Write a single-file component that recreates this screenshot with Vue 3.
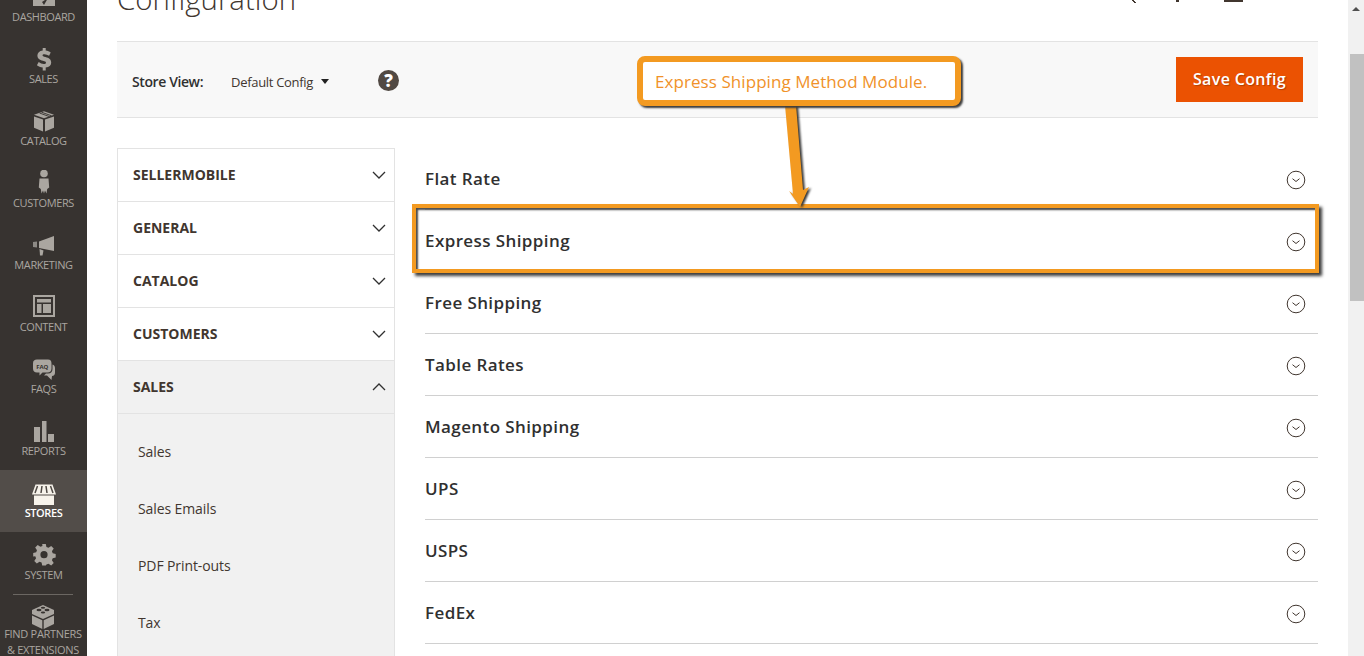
<script setup>
const navItems = [
  { label: 'Dashboard', icon: 'dash' },
  { label: 'Sales', icon: 'sales' },
  { label: 'Catalog', icon: 'catalog' },
  { label: 'Customers', icon: 'customers' },
  { label: 'Marketing', icon: 'marketing' },
  { label: 'Content', icon: 'content' },
  { label: 'FAQs', icon: 'faqs' },
  { label: 'Reports', icon: 'reports' },
  { label: 'Stores', icon: 'stores', active: true },
  { label: 'System', icon: 'system' }
]
const groups = [
  { label: 'SELLERMOBILE' },
  { label: 'GENERAL' },
  { label: 'CATALOG' },
  { label: 'CUSTOMERS' },
  { label: 'SALES', open: true }
]
const subItems = ['Sales', 'Sales Emails', 'PDF Print-outs', 'Tax']
const methods = ['Flat Rate', 'Express Shipping', 'Free Shipping', 'Table Rates', 'Magento Shipping', 'UPS', 'USPS', 'FedEx']
</script>

<template>
  <div class="shell">
    <aside class="sidebar">
      <div v-for="item in navItems" :key="item.label" class="nav-item" :class="{ active: item.active }">
        <svg class="nav-icon" viewBox="0 0 26 26" width="26" height="26" aria-hidden="true">
          <g v-if="item.icon === 'dash'"><path d="M2 0h22v22H2z" /><path d="M13 21l4-7-6 4z" fill="#373330" /></g>
          <path v-else-if="item.icon === 'sales'" d="M11.7 2h3v2.6c2 .2 3.700 .9 5 1.800l-1.600 3.300c-1.500-1-3.100-1.500-4.600-1.500-1.300 0-2 .4-2 1.100 0 .8.900 1.200 3 1.800 3.400 1 5.700 2.300 5.700 5.500 0 2.800-2 4.600-5.500 5v2.900h-3v-2.900c-2.300-.3-4.300-1.100-5.800-2.300l1.800-3.300c1.600 1.200 3.400 2 5 2 1.500 0 2.300-.5 2.300-1.300 0-.9-1-1.300-3.100-1.900-3.300-1-5.500-2.200-5.500-5.300 0-2.700 1.900-4.500 5.300-5z" />
          <g v-else-if="item.icon === 'catalog'" transform="translate(0 2.500) scale(1 .84)"><path d="M13 1l10 4-10 4.200L3 5z" /><path d="M3 7l9 3.800V25L3 20.500z" /><path d="M14 10.800L23 7v13.500L14 25z" /><path d="M8.500 3l10 4.300M10.500 2l10 4.300" stroke="#373330" stroke-width="1" fill="none" /></g>
          <g v-else-if="item.icon === 'customers'" transform="translate(0 -1.500)"><circle cx="13" cy="5" r="3.800" /><path d="M8.500 10h9l.7 9-2 1.500-.7 4.500-1.500-3-1 3-1-3-1.500 3-.7-4.500-2-1.500z" /></g>
          <g v-else-if="item.icon === 'marketing'"><path d="M8 9.500L23 4v15L8 16z" /><path d="M2 10l4-.5v6L2 15z" fill="#8d8a85" /><path d="M8.500 17l4 1.500-1 5h-2.500z" /></g>
          <g v-else-if="item.icon === 'content'" transform="translate(0 -1)"><path d="M2 2h22v22H2zM4 4v18h18V4z" fill-rule="evenodd" /><path d="M6 6h14v3.500H6zM6 11h4.500v9H6zM12 11h8v9h-8z" /></g>
          <g v-else-if="item.icon === 'faqs'" transform="translate(0 1.500)"><path d="M2 6c0-3 1.500-4 4-4h11c2.500 0 3.500 1.500 3.500 4v5c0 2.500-1.500 4-4 4h-5l-3 3v-3H6c-2.500 0-4-1.500-4-4z" /><path d="M21.500 7c1.500.5 2.500 1.500 2.500 3.500V15c0 2-1 3.500-3 3.500l-.5 4-4.500-4.500h-3l2-2h2c3 0 4.500-2 4.500-4.500z" /><text x="11.300" y="11" text-anchor="middle" class="faq-text">FAQ</text></g>
          <path v-else-if="item.icon === 'reports'" d="M3 9h6v15H3zM11 3h4.500v21H11zM17 16h6v8h-6z" />
          <g v-else-if="item.icon === 'stores'" transform="translate(0 2.500)"><path d="M4.500 2h17l3.500 10H1z" /><path d="M6.500 3.500L4 10.500M11 3.500L10 10.500M15 3.500L16 10.500M19.500 3.500L22 10.500" stroke="#4f4a45" stroke-width="1.500" fill="none" /><path d="M3 13h20v9.500H3z" /></g>
          <path v-else-if="item.icon === 'system'" transform="translate(1.300 1) scale(.9)" d="M11 1h4l.7 3.500 2.300.9 3-2 2.800 2.800-2 3 .9 2.300 3.300.7v4l-3.300.7-.9 2.300 2 3-2.800 2.800-3-2-2.300.9L15 25h-4l-.7-3.300-2.300-.9-3 2-2.800-2.800 2-3-.9-2.300L1 15v-4l3.300-.7.900-2.300-2-3L6 2.200l3 2 2.300-.9zM13 9a4 4 0 1 0 0 8 4 4 0 0 0 0-8z" fill-rule="evenodd" />
        </svg>
        <span class="nav-label">{{ item.label }}</span>
      </div>
      <div class="nav-extra">
        <svg class="nav-icon" viewBox="0 0 26 26" width="26" height="26" aria-hidden="true">
          <path d="M13 1l11 5v4l-11 5L2 10V6z" />
          <path d="M2 11.500l10.300 4.700V25L2 20zM24 11.500l-10.300 4.700V25L24 20z" />
          <ellipse cx="9" cy="6" rx="2.500" ry="1.200" fill="#373330" /><ellipse cx="17" cy="6" rx="2.500" ry="1.200" fill="#373330" /><ellipse cx="13" cy="3.800" rx="2.200" ry="1" fill="#373330" /><ellipse cx="13" cy="8.500" rx="2.200" ry="1" fill="#373330" />
        </svg>
        <span class="nav-label">Find Partners<br />&amp; Extensions</span>
      </div>
    </aside>

    <main class="main">
      <header class="page-head">
        <h1 class="title">Configuration</h1>
        <div class="head-tools">
          <span class="tool-search"></span>
          <span class="tool-bell"></span>
          <span class="tool-user"></span>
        </div>
      </header>

      <div class="actions">
        <div class="scope">
          <span class="scope-label">Store View:</span>
          <span class="scope-value">Default Config</span>
          <span class="caret"></span>
          <span class="help">?</span>
        </div>
        <button class="save" type="button">Save Config</button>
      </div>

      <div class="columns">
        <nav class="tabs">
          <div v-for="g in groups" :key="g.label" class="tab" :class="{ open: g.open }">
            <span>{{ g.label }}</span>
            <svg width="14" height="8" viewBox="0 0 14 8" aria-hidden="true">
              <path :d="g.open ? 'M1 7l6-6 6 6' : 'M1 1l6 6 6-6'" fill="none" stroke="#303030" stroke-width="1.300" />
            </svg>
          </div>
          <div class="subs">
            <div v-for="s in subItems" :key="s" class="sub">{{ s }}</div>
          </div>
        </nav>

        <section class="methods">
          <div v-for="m in methods" :key="m" class="method">
            <span>{{ m }}</span>
            <svg width="20" height="20" viewBox="0 0 20 20" aria-hidden="true">
              <circle cx="10" cy="10" r="8.800" fill="none" stroke="#41362f" stroke-width="1" />
              <path d="M6.500 8.700l3.500 2.800 3.500-2.800" fill="none" stroke="#41362f" stroke-width="1" />
            </svg>
          </div>
        </section>
      </div>

      <div class="highlight"></div>
      <svg class="arrow" width="40" height="106" viewBox="0 0 40 106" aria-hidden="true">
        <path d="M7 0h11l7 85 6-3-9 20-11-16 4 3z" />
      </svg>
      <div class="callout">Express Shipping Method Module.</div>
    </main>

    <div class="scrollbar">
      <span class="scroll-up"></span>
      <span class="scroll-thumb"></span>
    </div>
  </div>
</template>

<style>
html, body { margin: 0; overflow: hidden; background: #fff; }
</style>

<style scoped>
.shell {
  display: flex;
  height: 656px;
  overflow: hidden;
  font-family: "Open Sans", "Noto Sans", sans-serif;
  color: #303030;
  background: #fff;
}
.sidebar {
  flex: 0 0 87px;
  min-width: 0;
  background: #373330;
  margin-top: -26px;
  height: 682px;
  fill: #aaa6a0;
}
.nav-item {
  height: 62px;
  box-sizing: border-box;
  padding-top: 10px;
  display: flex;
  flex-direction: column;
  align-items: center;
  color: #aaa6a0;
}
.nav-item.active {
  background: #524d49;
  color: #fff;
  fill: #f7f3eb;
}
.nav-item.active .nav-label { font-weight: 600; }
.nav-icon { display: block; flex: none; }
.nav-label {
  font-size: 11px;
  line-height: 16px;
  letter-spacing: -0.4px;
  text-transform: uppercase;
  text-align: center;
  white-space: nowrap;
  margin-top: -1px;
}
.faq-text { font-size: 6px; font-weight: 700; fill: #373330; font-family: "Open Sans", sans-serif; }
.nav-extra {
  width: 60px;
  margin-left: 13px;
  border-top: 1px solid #6b6762;
  padding-top: 9px;
  display: flex;
  flex-direction: column;
  align-items: center;
  color: #aaa6a0;
}
.nav-extra .nav-label { line-height: 16px; letter-spacing: -0.3px; margin-top: -4px; }

.main {
  position: relative;
  flex: 1 1 auto;
  min-width: 0;
  padding: 0 30px;
}
.page-head {
  height: 41px;
  position: relative;
  display: flex;
  justify-content: space-between;
}
.title {
  margin: -20px 0 0;
  font-size: 29.400px;
  line-height: 38px;
  font-weight: 300;
  color: #41362f;
  letter-spacing: 0;
}
.head-tools { display: flex; align-items: flex-start; }
.tool-search {
  width: 4px; height: 3px; margin-right: 40px;
  background: linear-gradient(45deg, transparent 30%, #41362f 30%, #41362f 70%, transparent 70%);
}
.tool-bell { width: 3px; height: 2px; background: #41362f; margin-right: 45px; }
.tool-user { width: 19px; height: 1.500px; background: #41362f; margin-right: 75px; }

.actions {
  height: 75px;
  border-top: 1px solid #e3e3e3;
  border-bottom: 1px solid #e3e3e3;
  background: #f8f8f8;
  display: flex;
  align-items: center;
  justify-content: space-between;
  padding: 0 15px;
}
.scope { display: flex; align-items: center; }
.scope-label { font-size: 14px; font-weight: 600; width: 99px; margin-top: 4px; color: #303030; letter-spacing: -0.4px; }
.scope-value { font-size: 13px; color: #41362f; width: 90px; margin-top: 4px; letter-spacing: -0.3px; }
.caret {
  width: 0; height: 0;
  border-left: 4.500px solid transparent;
  border-right: 4.500px solid transparent;
  border-top: 5px solid #222;
  margin-top: 4px;
}
.help {
  width: 21px; height: 21px;
  border-radius: 50%;
  background: #514943;
  color: #fff;
  font-size: 17px;
  font-weight: 800;
  line-height: 21px;
  text-align: center;
  margin-left: 49px;
  margin-top: 2px;
}
.save {
  width: 127px; height: 45px;
  border: 0;
  background: #eb5202;
  color: #fff;
  font-family: inherit;
  font-size: 16px;
  font-weight: 600;
  letter-spacing: 0.35px;
  padding: 0 0 1px;
  text-shadow: 1px 1px 1px rgba(0,0,0,.25);
}

.columns {
  display: flex;
  margin-top: 30px;
  gap: 30px;
}
.tabs {
  flex: 0 0 278px;
  box-sizing: border-box;
  border: 1px solid #e3e3e3;
  border-bottom: 0;
  height: 520px;
}
.tab {
  height: 53px;
  box-sizing: border-box;
  border-bottom: 1px solid #e3e3e3;
  padding: 0 8px 1px 15px;
  display: flex;
  align-items: center;
  justify-content: space-between;
  font-size: 14px;
  font-weight: 700;
  color: #41362f;
}
.tab.open { background: #f1f1f1; }
.subs { background: #f1f1f1; padding-top: 9px; height: 300px; }
.sub {
  height: 57px;
  box-sizing: border-box;
  padding-left: 20px;
  font-size: 14px;
  line-height: 57px;
  color: #41362f;
  letter-spacing: -0.1px;
}
.methods { flex: 1 1 auto; min-width: 0; margin-top: 0; }
.method {
  height: 62px;
  box-sizing: border-box;
  border-bottom: 1px solid #d0d0d0;
  display: flex;
  align-items: center;
  justify-content: space-between;
  padding-right: 12px;
  font-size: 17px;
  font-weight: 600;
  letter-spacing: 0.4px;
  color: #303030;
}
.method svg { margin-top: 2px; }

.highlight {
  position: absolute;
  left: 325px; top: 204px;
  width: 899px; height: 61px;
  border: 4px solid #f39a21;
  box-shadow: 3px 3px 3px #3c3c3c, inset 2px 2px 2px #4a4a4a;
  background: transparent;
}
.arrow {
  position: absolute;
  left: 691px;
  top: 105px;
  fill: #f39a21;
  filter: drop-shadow(2px 1px 1px #333);
}
.callout {
  position: absolute;
  left: 550px; top: 56px;
  width: 324px; height: 50px;
  box-sizing: border-box;
  border: 6px solid #f39a21;
  border-radius: 8px;
  background: #fff;
  box-shadow: 2px 2px 2px #3c3c3c;
  color: #f0922a;
  font-size: 17px;
  letter-spacing: 0.07px;
  line-height: 40px;
  padding-left: 12px;
  white-space: nowrap;
}
.scrollbar {
  flex: 0 0 16px;
  position: relative;
  background: #f1f1f1;
}
.scroll-up {
  position: absolute;
  left: 4px; top: 7px;
  width: 0; height: 0;
  border-left: 4px solid transparent;
  border-right: 4px solid transparent;
  border-bottom: 4px solid #505050;
}
.scroll-thumb {
  position: absolute;
  left: 2px; top: 54px;
  width: 14px; height: 247px;
  background: #c1c1c1;
}
</style>
